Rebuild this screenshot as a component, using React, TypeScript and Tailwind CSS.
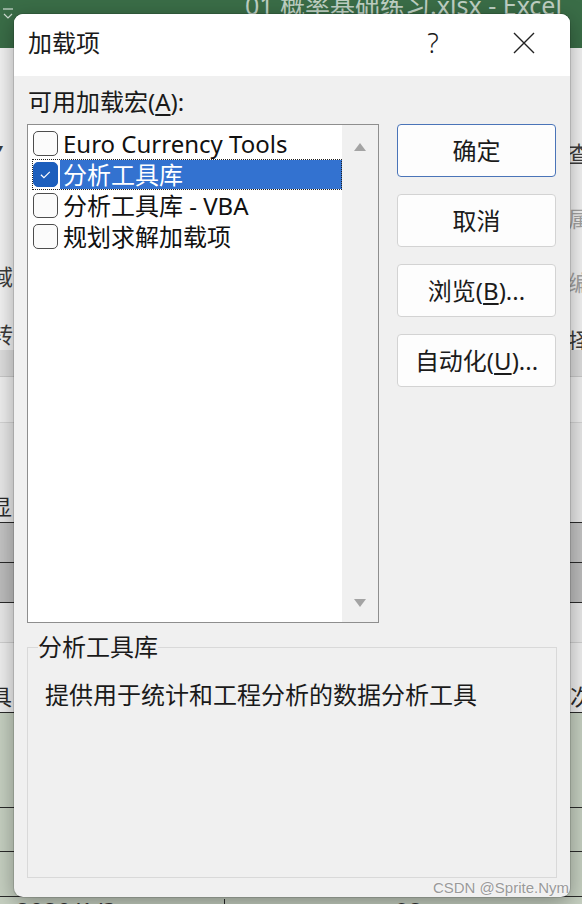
import React from 'react';

const ui = "font-['Segoe_UI','Noto_Sans','Noto_Sans_CJK_SC',sans-serif]";

const items = [
  { label: 'Euro Currency Tools', checked: false, selected: false },
  { label: '分析工具库', checked: true, selected: true },
  { label: '分析工具库 - VBA', checked: false, selected: false },
  { label: '规划求解加载项', checked: false, selected: false },
];

const sheetRows = [
  { h: 'h-[27px]', bg: 'bg-[#dedede]', line: 'border-[#c9c9c9]', left: '', right: '' },
  { h: 'h-[46px]', bg: 'bg-[#efefef]', line: 'border-[#d4d4d4]', left: '', right: '' },
  { h: 'h-[100px]', bg: 'bg-[#e8e8e8]', line: 'border-[#2a2a2a]', left: '显', right: '' },
  { h: 'h-[40px]', bg: 'bg-[#c4c4c4]', line: 'border-[#2a2a2a]', left: '', right: '' },
  { h: 'h-[40px]', bg: 'bg-[#bdbdbd]', line: 'border-[#2a2a2a]', left: '', right: '' },
  { h: 'h-[40px]', bg: 'bg-[#e8e8e8]', line: 'border-[#cfcfcf]', left: '', right: '' },
  { h: 'h-[70px]', bg: 'bg-[#efefef]', line: 'border-[#2a2a2a]', left: '具', right: '次' },
  { h: 'h-[95px]', bg: 'bg-[#c6d0c1]', line: 'border-[#2a2a2a]', left: '', right: '' },
  { h: 'h-[44px]', bg: 'bg-[#c6d0c1]', line: 'border-[#2a2a2a]', left: '', right: '' },
  { h: 'h-[45px]', bg: 'bg-[#c6d0c1]', line: 'border-[#2a2a2a]', left: '', right: '' },
];

const CheckBox = ({ checked }: { checked: boolean }) => (
  <span
    className={`w-[25px] h-[25px] rounded-[5px] flex items-center justify-center shrink-0 ${
      checked ? 'bg-[#1d5fbd] border border-[#1d5fbd]' : 'bg-[#fbfbfb] border-[1.5px] border-[#4d4d4d]'
    }`}
  >
    {checked && (
      <svg width="25" height="25" viewBox="0 0 25 25">
        <path d="M7.5 12.8 L10.8 16 L17.2 9.6" stroke="white" strokeWidth="1.3" fill="none" />
      </svg>
    )}
  </span>
);

const DialogButton = ({ children, primary }: { children: React.ReactNode; primary?: boolean }) => (
  <button
    className={`h-[53px] w-[159px] rounded-[4px] bg-[#fdfdfd] text-[24px] leading-[28px] text-[#1b1b1b] border ${
      primary ? 'border-[#4a74b8]' : 'border-[#d3d3d3]'
    }`}
  >
    {children}
  </button>
);

const App: React.FC = () => {
  return (
    <div className={`relative w-[582px] h-[904px] overflow-hidden bg-[#c6d0c1] ${ui}`}>
      {/* Excel window behind the dialog */}
      <div className="flex flex-col">
        <div className="h-[48px] bg-[#3a6d47] flex items-start overflow-hidden">
          <svg width="14" height="24" viewBox="0 0 14 24" className="ml-[1px] mt-[6px]">
            <path d="M2 3 H12" stroke="#cfdcd2" strokeWidth="1.2" />
            <path d="M3 8 L7 12 L11 8" stroke="#cfdcd2" strokeWidth="1.2" fill="none" />
          </svg>
          <span className="ml-[230px] -mt-[11px] text-[25px] leading-[32px] text-[#bfd0c3] whitespace-nowrap">
            01 概率基础练习.xlsx - Excel
          </span>
        </div>
        <div className="h-[302px] bg-[#f3f3f3] flex justify-between text-[22px] leading-[24px] overflow-hidden">
          <div className="-ml-[9px] flex flex-col text-[#3c3c3c]">
            <span className="mt-[88px] ml-[6px] text-[12px]">▾</span>
            <span className="mt-[104px]">域</span>
            <span className="mt-[34px]">转</span>
          </div>
          <div className="-mr-[8px] flex flex-col">
            <span className="mt-[93px] text-[#3c3c3c]">查</span>
            <span className="mt-[41px] text-[#a3a3a3]">属</span>
            <span className="mt-[40px] text-[#a3a3a3]">编</span>
            <span className="mt-[34px] text-[#3c3c3c]">择</span>
          </div>
        </div>
        {sheetRows.map((r, i) => (
          <div
            key={i}
            className={`${r.h} ${r.bg} ${r.line} border-b flex justify-between items-end pb-[4px] text-[22px] leading-[24px] text-[#2a2a2a] overflow-hidden`}
          >
            <span className="-ml-[10px]">{r.left}</span>
            <span className="-mr-[10px]">{r.right}</span>
          </div>
        ))}
        <div className="h-[40px] flex items-start text-[24px] leading-[24px] text-[#333]">
          <span className="ml-[16px] mt-[2px] w-[209px] border-r border-[#2a2a2a] h-full">2020/1/3</span>
          <span className="ml-[170px] mt-[2px]">92</span>
        </div>
      </div>

      {/* Add-ins dialog */}
      <div className="absolute left-[14px] top-[14px] w-[556px] h-[883px] rounded-[9px] bg-[#f0f0f0] overflow-hidden flex flex-col shadow-[0_0_0_1px_rgba(0,0,0,0.12),0_6px_22px_rgba(0,0,0,0.35)] text-[#1a1a1a]">
        <div className="h-[62px] shrink-0 bg-white flex items-center pl-[14px] pb-[4px]">
          <span className="text-[24px] leading-[28px]">加载项</span>
          <span className="ml-auto w-[24px] text-center text-[27px] leading-[28px] font-light">?</span>
          <svg width="22" height="22" viewBox="0 0 22 22" className="ml-[68px] mr-[35px]">
            <path d="M1 1 L21 21 M21 1 L1 21" stroke="#222" strokeWidth="1.4" />
          </svg>
        </div>

        <div className="flex-1 flex flex-col px-[13px] pt-[12px] pb-[19px]">
          <div className="h-[28px] text-[24px] leading-[28px] pl-[1px]">
            可用加载宏(<span className="underline underline-offset-[3px]">A</span>):
          </div>

          <div className="mt-[8px] flex gap-[18px]">
            <div className="w-[352px] h-[499px] border border-[#8e8e8e] flex bg-white">
              <div className="flex-1 flex flex-col pt-[3px] pl-[4px]">
                {items.map((it) => (
                  <div
                    key={it.label}
                    className={`h-[31px] flex items-center ${
                      it.selected ? 'outline outline-1 outline-dotted outline-[#222] -outline-offset-1' : ''
                    }`}
                  >
                    <span className="ml-[1px]">
                      <CheckBox checked={it.checked} />
                    </span>
                    <span
                      className={`ml-[2px] pl-[3px] flex-1 self-stretch flex items-center text-[24px] leading-[31px] whitespace-nowrap ${
                        it.selected ? 'bg-[#3372d0] text-white my-[1px]' : 'text-[#111]'
                      }`}
                    >
                      {it.label}
                    </span>
                  </div>
                ))}
              </div>
              <div className="w-[36px] bg-[#f0f0f0] flex flex-col items-center justify-between pt-[18px] pb-[15px]">
                <svg width="12" height="8" viewBox="0 0 12 8">
                  <path d="M6 0 L12 8 L0 8 Z" fill="#a3a3a3" />
                </svg>
                <svg width="12" height="8" viewBox="0 0 12 8">
                  <path d="M0 0 L12 0 L6 8 Z" fill="#a3a3a3" />
                </svg>
              </div>
            </div>

            <div className="flex flex-col gap-[17px]">
              <DialogButton primary>确定</DialogButton>
              <DialogButton>取消</DialogButton>
              <DialogButton>
                浏览(<span className="underline underline-offset-[3px]">B</span>)...
              </DialogButton>
              <DialogButton>
                自动化(<span className="underline underline-offset-[3px]">U</span>)...
              </DialogButton>
            </div>
          </div>

          <fieldset className="mt-[10px] h-[245px] border border-[#d9d9d9] pl-[17px]">
            <legend className="ml-[-7px] px-0 text-[24px] leading-[28px]">分析工具库</legend>
            <div className="pt-[20px] text-[24px] leading-[28px]">提供用于统计和工程分析的数据分析工具</div>
          </fieldset>
        </div>
      </div>

      <span className="absolute right-[13px] bottom-[7px] font-['Liberation_Sans',sans-serif] text-[15px] leading-[18px] text-[#9a9a9a] [text-shadow:0_0_2px_white]">
        CSDN @Sprite.Nym
      </span>
    </div>
  );
};

export default App;
